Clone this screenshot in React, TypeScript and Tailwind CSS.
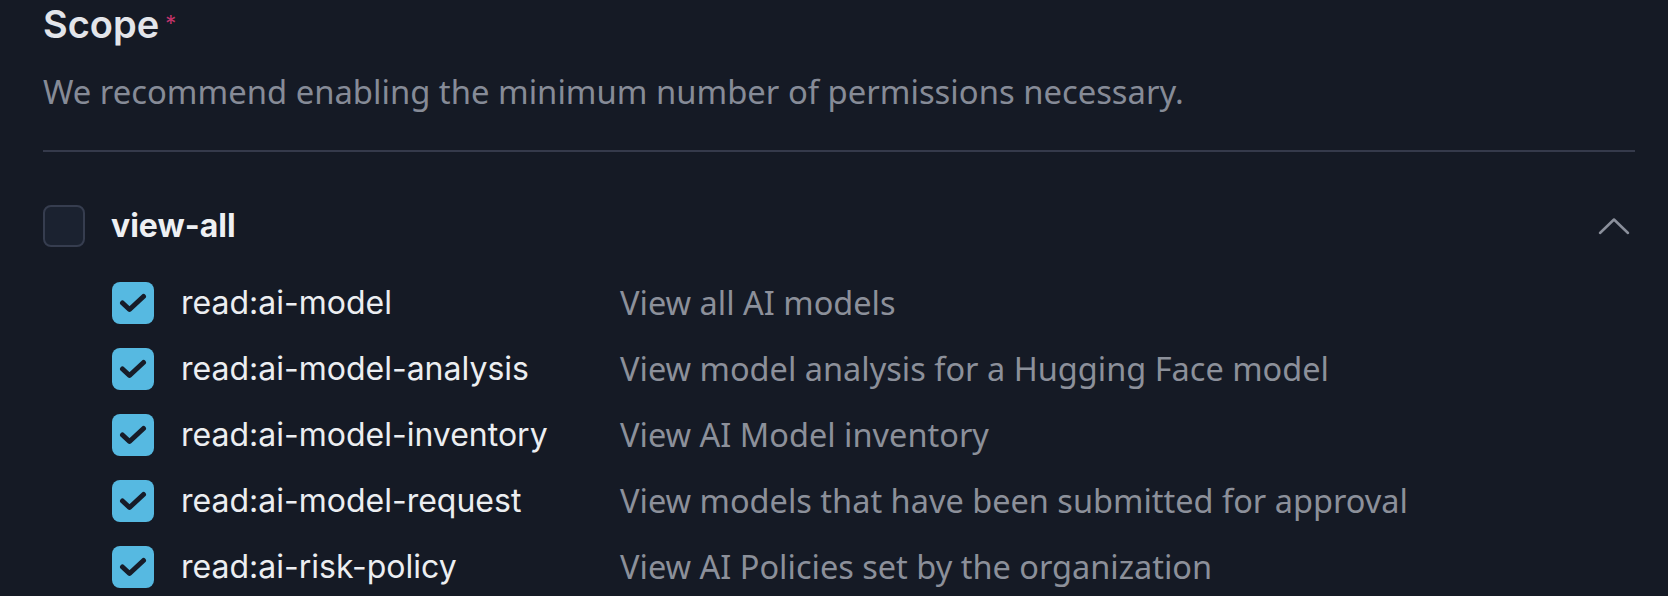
import { useState } from 'react';

const SCOPES = [
  { key: 'read:ai-model', desc: 'View all AI models' },
  { key: 'read:ai-model-analysis', desc: 'View model analysis for a Hugging Face model' },
  { key: 'read:ai-model-inventory', desc: 'View AI Model inventory' },
  { key: 'read:ai-model-request', desc: 'View models that have been submitted for approval' },
  { key: 'read:ai-risk-policy', desc: 'View AI Policies set by the organization' },
];

function CheckBox({ checked }: { checked: boolean }) {
  if (!checked) {
    return (
      <div className="w-[42px] h-[42px] shrink-0 rounded-[8px] border-2 border-[#363d4f] bg-[#1b2230]" />
    );
  }
  return (
    <div className="w-[42px] h-[42px] shrink-0 rounded-[8px] bg-[#56b9e1] flex items-center justify-center">
      <svg width="28" height="20" viewBox="0 0 28 20" fill="none">
        <path d="M3.5 10 L10.5 16.5 L24.5 3.5" stroke="#171c28" strokeWidth="5" strokeLinecap="round" strokeLinejoin="round" />
      </svg>
    </div>
  );
}

export default function App() {
  const [open] = useState(true);

  return (
    <div className="min-h-screen bg-[#151a25] pl-[43px] pr-[33px] pt-[1px] font-['Inter',sans-serif]">
      <div className="flex items-start">
        <h2 className="text-[38px] leading-[46px] font-semibold text-[#e3e5ea]">Scope</h2>
        <span className="ml-[6px] mt-[11px] text-[22px] leading-none text-[#c2336a]">*</span>
      </div>
      <p className="mt-[24px] text-[32.8px] leading-[42px] text-[#868b97] font-['Noto_Sans',sans-serif]">
        We recommend enabling the minimum number of permissions necessary.
      </p>
      <div className="mt-[37px] h-[2px] bg-[#353a4b]" />

      <div className="mt-[53px] flex items-center">
        <CheckBox checked={false} />
        <span className="ml-[26px] text-[32px] leading-[42px] font-bold text-[#eef0f3]">view-all</span>
        <svg className="ml-auto mr-[5px]" width="32" height="18" viewBox="0 0 32 18" fill="none">
          <path d="M2 16 L16 2.5 L30 16" stroke="#8a8f9b" strokeWidth="2.5" strokeLinecap="round" strokeLinejoin="round" />
        </svg>
      </div>

      {open && (
        <div className="mt-[35px] pl-[69px] flex flex-col gap-[24px]">
          {SCOPES.map((s) => (
            <div key={s.key} className="flex items-center">
              <CheckBox checked />
              <span className="ml-[27px] w-[439px] text-[32px] leading-[42px] text-[#eceef1]">{s.key}</span>
              <span className="text-[32.5px] leading-[42px] text-[#8c909a] font-['Noto_Sans',sans-serif]">{s.desc}</span>
            </div>
          ))}
        </div>
      )}
    </div>
  );
}
